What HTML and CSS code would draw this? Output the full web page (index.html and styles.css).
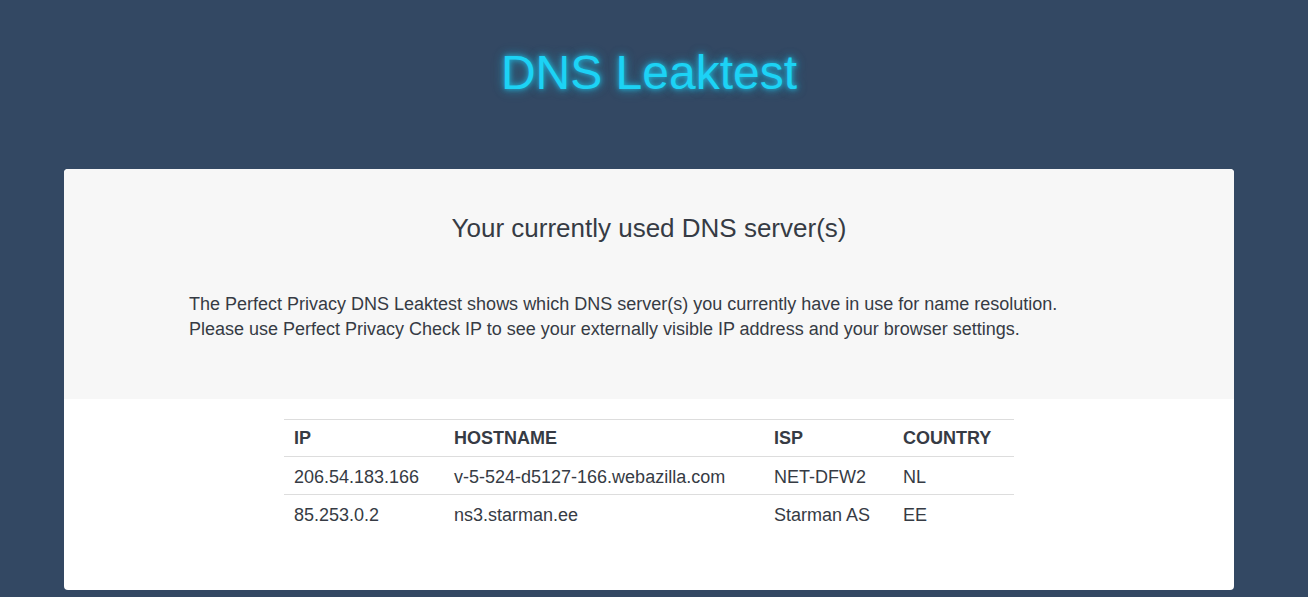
FILE: index.html
```html
<!DOCTYPE html>
<html lang="en">
<head>
<meta charset="utf-8">
<title>DNS Leaktest</title>
<link rel="stylesheet" href="styles.css">
</head>
<body>
<div class="page">
  <header class="masthead">
    <h1 class="brand-title">DNS Leaktest</h1>
  </header>
  <main class="card">
    <section class="card-intro">
      <h2 class="card-heading">Your currently used DNS server(s)</h2>
      <p class="card-text">The Perfect Privacy DNS Leaktest shows which DNS server(s) you currently have in use for name resolution.<br>Please use Perfect Privacy Check IP to see your externally visible IP address and your browser settings.</p>
    </section>
    <section class="card-results">
      <table class="dns-table">
        <thead>
          <tr><th class="col-ip">IP</th><th class="col-host">Hostname</th><th class="col-isp">ISP</th><th class="col-country">Country</th></tr>
        </thead>
        <tbody>
          <tr><td>206.54.183.166</td><td>v-5-524-d5127-166.webazilla.com</td><td>NET-DFW2</td><td>NL</td></tr>
          <tr><td>85.253.0.2</td><td>ns3.starman.ee</td><td>Starman AS</td><td>EE</td></tr>
        </tbody>
      </table>
    </section>
  </main>
</div>
</body>
</html>
```
FILE: styles.css
```css
html, body {
  margin: 0;
  padding: 0;
}
body {
  background: #334863;
  font-family: "Liberation Sans", Arial, sans-serif;
  color: #363b44;
  min-height: 597px;
}
.page {
  width: 1170px;
  margin-left: 64px;
}
.masthead {
  display: flex;
  justify-content: center;
  padding-top: 44px;
  height: 125px;
  box-sizing: border-box;
}
.brand-title {
  margin: 0;
  font-weight: normal;
  font-size: 48px;
  line-height: 58px;
  color: #1cd3f5;
  text-shadow: 0 0 5px rgba(28, 200, 240, 0.8), 0 0 10px rgba(28, 200, 240, 0.5), 0 0 14px rgba(28, 200, 240, 0.3);
}
.card {
  display: block;
  margin-top: 44px;
  background: #ffffff;
  border-radius: 4px;
  overflow: hidden;
}
.card-intro {
  background: #f7f7f7;
  height: 230px;
  box-sizing: border-box;
  padding-top: 43px;
  display: flex;
  flex-direction: column;
  align-items: center;
}
.card-heading {
  margin: 0;
  font-weight: normal;
  font-size: 26px;
  line-height: 32px;
  color: #363b44;
}
.card-text {
  margin: 48px 0 0 0;
  width: 920px;
  font-size: 18px;
  line-height: 25px;
}
.card-results {
  padding: 20px 0 58px;
  display: flex;
  justify-content: center;
}
.dns-table {
  width: 730px;
  table-layout: fixed;
  border-collapse: collapse;
  font-size: 18px;
}
.dns-table th,
.dns-table td {
  text-align: left;
  padding: 7px 10px;
  line-height: 22px;
  border-top: 1px solid #dddddd;
  white-space: nowrap;
}
.dns-table td {
  padding-top: 9px;
  padding-bottom: 6px;
}
.dns-table th {
  font-weight: bold;
  text-transform: uppercase;
  color: #363b44;
}
.col-ip { width: 140px; }
.col-host { width: 300px; }
.col-isp { width: 109px; }
.col-country { width: 101px; }
```
